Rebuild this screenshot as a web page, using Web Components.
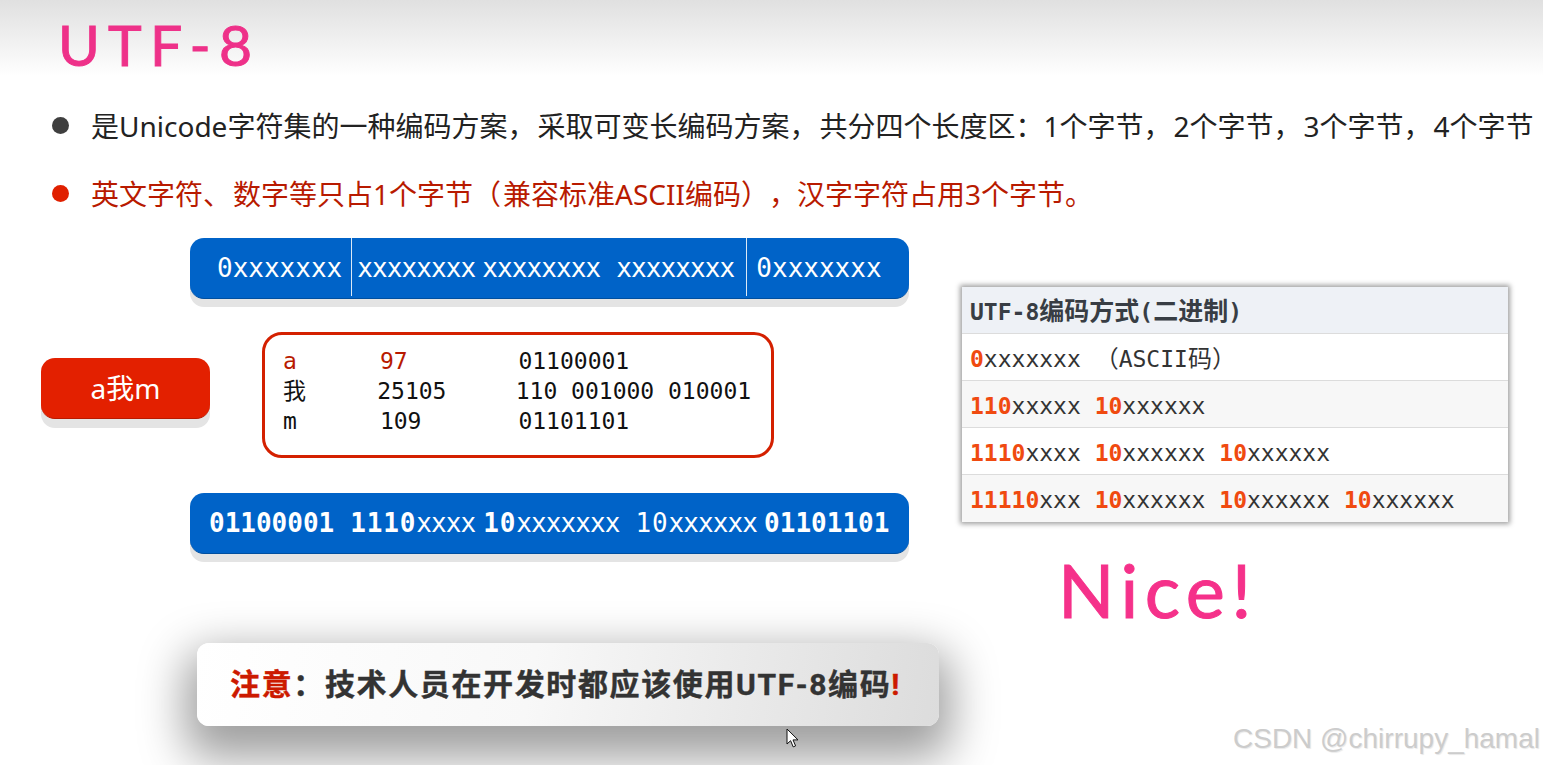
<!DOCTYPE html>
<html lang="zh-CN">
<head>
<meta charset="utf-8">
<title>UTF-8</title>
<style>
  html, body { margin: 0; padding: 0; background: #fff; }
  body { width: 1543px; height: 765px; overflow: hidden; }
</style>
</head>
<body>
<slide-page>
  <slide-title slot="title">UTF-8</slide-title>
  <bullet-line slot="bullets">是Unicode字符集的一种编码方案<span class="p">，</span>采取可变长编码方案<span class="p">，</span>共分四个长度区：1个字节<span class="p">，</span>2个字节<span class="p">，</span>3个字节<span class="p">，</span>4个字节</bullet-line>
  <bullet-line slot="bullets" tone="red">英文字符<span class="p">、</span>数字等只占1个字节<span class="p">（</span>兼容标准ASCII编码），汉字字符占用3个字节。</bullet-line>

  <bit-bar slot="left" divided>
    <span>0xxxxxxx</span>
    <span class="narrow">xxxxxxxx</span>
    <span class="narrow" style="margin-left:7px">xxxxxxxx</span>
    <span class="narrow" style="margin-left:16px">xxxxxxxx</span>
    <span>0xxxxxxx</span>
  </bit-bar>
  <sample-row slot="left">
    <sample-chip>a我m</sample-chip>
    <code-box></code-box>
  </sample-row>
  <bit-bar slot="left">
    <span class="strong">01100001</span>
    <span class="lead" style="margin-left:16px">1110</span><span class="narrow">xxxx</span>
    <span class="lead" style="margin-left:8px">10</span><span class="narrow">xxxxxxx</span>
    <span class="thin" style="margin-left:16px">10</span><span class="narrow">xxxxxx</span>
    <span class="strong" style="margin-left:7px">01101101</span>
  </bit-bar>
  <notice-card slot="left"></notice-card>

  <encoding-table slot="right"></encoding-table>
  <nice-note slot="right">Nice!</nice-note>

  <mouse-pointer slot="over"></mouse-pointer>
  <water-mark slot="over">CSDN @chirrupy_hamal</water-mark>
</slide-page>

<script>
const CJK = '"Noto Sans CJK SC", sans-serif';
const MONO = `"DejaVu Sans Mono", ${CJK}`;

class SlidePage extends HTMLElement {
  constructor() {
    super();
    this.attachShadow({ mode: 'open' }).innerHTML = `
      <style>
        :host { display: block; position: relative; width: 1543px; height: 765px; overflow: hidden; background: #fff; }
        #main { display: flex; }
        #left { display: block; width: 962px; flex: none; }
        #right { display: block; flex: none; }
      </style>
      <slot name="title"></slot>
      <div id="bullets"><slot name="bullets"></slot></div>
      <div id="main">
        <div id="left"><slot name="left"></slot></div>
        <div id="right"><slot name="right"></slot></div>
      </div>
      <slot name="over"></slot>
    `;
  }
}

class SlideTitle extends HTMLElement {
  constructor() {
    super();
    this.attachShadow({ mode: 'open' }).innerHTML = `
      <style>
        :host {
          display: block;
          height: 91px;
          box-sizing: border-box;
          padding: 9px 0 0 58px;
          background: linear-gradient(#e0e0e0 0, #f4f4f4 50px, #fff 76px);
          font: 400 57px/70px Lato, sans-serif;
          letter-spacing: 8.2px;
          color: #ee3189;
          -webkit-text-stroke: 1px #ee3189;
        }
      </style>
      <slot></slot>
    `;
  }
}

class BulletLine extends HTMLElement {
  constructor() {
    super();
    this.attachShadow({ mode: 'open' }).innerHTML = `
      <style>
        :host {
          display: flex;
          align-items: center;
          height: 68px;
          padding-left: 52px;
          font: 400 28px/34px "Noto Sans", ${CJK};
          text-spacing-trim: space-all;
          color: #222;
          white-space: nowrap;
        }
        :host([tone="red"]) { color: #b81a00; }
        i { flex: none; width: 17px; height: 17px; margin-right: 22px; border-radius: 50%; background: #3f3f3f; }
        :host([tone="red"]) i { background: #e02000; }
        #text { margin-top: 2px; }
        ::slotted(.p) { margin-right: 2px; }
      </style>
      <i></i><span id="text"><slot></slot></span>
    `;
  }
}

class BitBar extends HTMLElement {
  constructor() {
    super();
    this.attachShadow({ mode: 'open' }).innerHTML = `
      <style>
        :host {
          display: flex;
          align-items: center;
          box-sizing: border-box;
          width: 719px;
          height: 61px;
          margin-left: 190px;
          padding-left: 19px;
          border-radius: 14px;
          background: #0063c8;
          border-bottom: 1px solid #004f9f;
          box-shadow: 0 8px 0 #e4e4e4;
          color: #fff;
          font: 400 26px/60px ${MONO};
          white-space: pre;
        }
        :host([divided]) { padding-left: 27px; margin-top: 11px; margin-bottom: 33px; }
        ::slotted(.narrow) { letter-spacing: -.9px; }
        ::slotted(.strong) { font-weight: 700; }
        ::slotted(.lead) { font-weight: 700; letter-spacing: .85px; }
        ::slotted(.thin) { letter-spacing: .85px; font-weight: 400; }
        #rules { position: absolute; inset: 0 0 2px 0; pointer-events: none; }
        #rules i { position: absolute; top: 0; bottom: 0; width: 1px; background: #dce9f6; }
      </style>
      <slot></slot>
    `;
    if (this.hasAttribute('divided')) {
      this.style.position = 'relative';
      const rules = document.createElement('div');
      rules.id = 'rules';
      rules.innerHTML = '<i style="left:161px"></i><i style="left:556px"></i>';
      this.shadowRoot.appendChild(rules);
      const spans = this.querySelectorAll('span');
      spans[1].style.marginLeft = '15px';
      spans[4].style.marginLeft = '22px';
    }
  }
}

class SampleRow extends HTMLElement {
  constructor() {
    super();
    this.attachShadow({ mode: 'open' }).innerHTML = `
      <style>
        :host { display: flex; margin-left: 41px; height: 126px; margin-bottom: 35px; }
      </style>
      <slot></slot>
    `;
  }
}

class SampleChip extends HTMLElement {
  constructor() {
    super();
    this.attachShadow({ mode: 'open' }).innerHTML = `
      <style>
        :host {
          display: flex;
          align-items: center;
          justify-content: center;
          box-sizing: border-box;
          width: 169px;
          height: 61px;
          margin: 26px 52px 0 0;
          border-radius: 14px;
          background: #e32000;
          border-bottom: 1px solid #b81a00;
          box-shadow: 0 9px 0 #e4e4e4;
          color: #fff;
          font: 400 28px/34px "Noto Sans", ${CJK};
        }
      </style>
      <slot></slot>
    `;
  }
}

class CodeBox extends HTMLElement {
  constructor() {
    super();
    this.attachShadow({ mode: 'open' }).innerHTML = `
      <style>
        :host {
          display: block;
          box-sizing: border-box;
          width: 512px;
          height: 126px;
          padding: 11px 0 0 18px;
          border: 3px solid #d42000;
          border-radius: 20px;
          color: #111;
          font: 400 23px/30px ${MONO};
        }
        div { white-space: pre; }
        .a { color: #b81a00; }
        .wo { margin-right: 2px; }
      </style>
      <div><span class="a">a      97</span>        01100001</div>
      <div><span class="wo">我</span>     25105     110 001000 010001</div>
      <div>m      109       01101101</div>
    `;
  }
}

class NoticeCard extends HTMLElement {
  constructor() {
    super();
    this.attachShadow({ mode: 'open' }).innerHTML = `
      <style>
        :host {
          display: flex;
          align-items: center;
          box-sizing: border-box;
          width: 742px;
          height: 83px;
          margin: 89px 0 0 197px;
          padding-left: 33px;
          border-radius: 12px;
          background: linear-gradient(100deg, #fff 0%, #f8f8f8 45%, #dcdcdc 100%);
          box-shadow: 0 20px 46px 12px rgba(0,0,0,.38);
          color: #333;
          font: 700 30px/40px Roboto, ${CJK};
          letter-spacing: 1.63px;
          text-spacing-trim: space-all;
          -webkit-text-stroke: .4px currentColor;
        }
        span { white-space: pre; }
        b { color: #cc1a00; font-weight: 700; }
      </style>
      <span><b>注意</b>：技术人员在开发时都应该使用UTF-8编码<b>!</b></span>
    `;
  }
}

class EncodingTable extends HTMLElement {
  constructor() {
    super();
    this.attachShadow({ mode: 'open' }).innerHTML = `
      <style>
        :host {
          display: block;
          width: 546px;
          margin-top: 60px;
          box-shadow: 0 0 5px 2px rgba(0,0,0,.38);
          color: #333;
          font: 400 23px/50px ${MONO};
          text-spacing-trim: space-all;
        }
        div { height: 46px; padding-left: 8px; border-bottom: 1px solid #dcdcdc; white-space: pre; overflow: hidden; }
        div:last-child { border-bottom: 0; height: 47px; }
        .head { background: #eef1f6; font-weight: 700; color: #383d44; }
        .head span { font-size: 25px; }
        .wide { font-size: 24px; }
        .alt { background: #f7f7f7; }
        b { color: #f04a10; font-weight: 700; }
      </style>
      <div class="head">UTF-8<span>编码方式</span>(<span>二进制</span>)</div>
      <div><b>0</b>xxxxxxx <span class="wide">（</span>ASCII<span class="wide">码）</span></div>
      <div class="alt"><b>110</b>xxxxx <b>10</b>xxxxxx</div>
      <div><b>1110</b>xxxx <b>10</b>xxxxxx <b>10</b>xxxxxx</div>
      <div class="alt"><b>11110</b>xxx <b>10</b>xxxxxx <b>10</b>xxxxxx <b>10</b>xxxxxx</div>
    `;
  }
}

class NiceNote extends HTMLElement {
  constructor() {
    super();
    this.attachShadow({ mode: 'open' }).innerHTML = `
      <style>
        :host {
          display: block;
          margin: 18px 0 0 96px;
          font: 400 74px/100px Lato, sans-serif;
          letter-spacing: 6.5px;
          color: #f5318a;
          -webkit-text-stroke: 1px #f5318a;
        }
      </style>
      <slot></slot>
    `;
  }
}

class MousePointer extends HTMLElement {
  constructor() {
    super();
    this.attachShadow({ mode: 'open' }).innerHTML = `
      <style>
        :host { position: absolute; left: 786px; top: 728px; width: 14px; height: 21px; }
        svg { display: block; }
      </style>
      <svg width="14" height="21" viewBox="0 0 14 21">
        <path d="M1 1v15l3.6-3.3 2.6 6.2 2.4-1-2.6-6h5z" fill="#fff" stroke="#111" stroke-width="1"/>
      </svg>
    `;
  }
}

class WaterMark extends HTMLElement {
  constructor() {
    super();
    this.attachShadow({ mode: 'open' }).innerHTML = `
      <style>
        :host {
          position: absolute;
          left: 1233px;
          top: 721px;
          font: 400 28px/36px "Liberation Sans", sans-serif;
          color: #ccc;
          text-shadow: 1px 1px 1px #e8e8e8;
          white-space: nowrap;
        }
      </style>
      <slot></slot>
    `;
  }
}

customElements.define('slide-page', SlidePage);
customElements.define('slide-title', SlideTitle);
customElements.define('bullet-line', BulletLine);
customElements.define('bit-bar', BitBar);
customElements.define('sample-row', SampleRow);
customElements.define('sample-chip', SampleChip);
customElements.define('code-box', CodeBox);
customElements.define('notice-card', NoticeCard);
customElements.define('encoding-table', EncodingTable);
customElements.define('nice-note', NiceNote);
customElements.define('mouse-pointer', MousePointer);
customElements.define('water-mark', WaterMark);
</script>
</body>
</html>
